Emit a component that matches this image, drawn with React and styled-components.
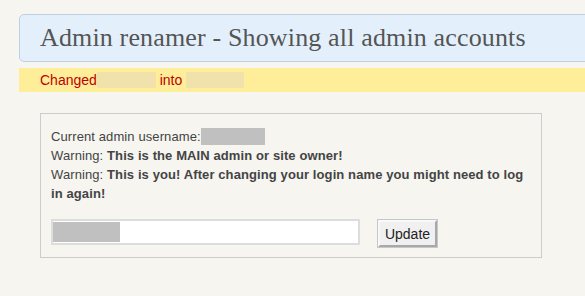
import React from "react";
import styled, { createGlobalStyle } from "styled-components";

const Global = createGlobalStyle`
  html, body { margin: 0; padding: 0; background: #f6f5f0; overflow: hidden; }
  body { font-family: "Liberation Sans", Arial, sans-serif; }
`;

const Page = styled.div`
  width: 620px;
  padding: 14px 0 0 19px;
  display: flex;
  flex-direction: column;
`;

const Header = styled.div`
  height: 46px;
  display: flex;
  align-items: center;
  padding-left: 20px;
  background: #e3f0fc;
  border: 1px solid #bfcfdf;
  border-radius: 5px;
`;

const Title = styled.h1`
  margin: 0;
  font-family: "Liberation Serif", Georgia, serif;
  font-weight: normal;
  font-size: 26px;
  letter-spacing: 0.15px;
  color: #555;
  margin-top: -1px;
`;

const Notice = styled.div`
  margin-top: 6px;
  height: 24px;
  background: #ffee99;
  display: flex;
  align-items: center;
  padding-left: 21px;
  font-size: 14px;
  color: #c00000;
`;

const Mask = styled.span`
  display: inline-block;
  width: ${(p) => p.$w}px;
  height: ${(p) => p.$h}px;
  background: ${(p) => p.$c};
  vertical-align: middle;
  margin: ${(p) => p.$m || "0"};
`;

const Box = styled.div`
  margin: 21px 0 0 21px;
  width: 480px;
  border: 1px solid #cccccc;
  padding: 13px 10px 10px 10px;
  font-size: 13px;
  line-height: 19px;
  letter-spacing: 0.1px;
  color: #444;
`;

const Line = styled.div``;

const Strong = styled.b`
  font-weight: bold;
`;

const FormRow = styled.div`
  display: flex;
  align-items: flex-start;
  gap: 18px;
  margin-top: 16px;
`;

const Input = styled.div`
  width: 305px;
  height: 22px;
  background: #fff;
  border: 2px solid #dddddd;
  display: flex;
  align-items: center;
`;

const Button = styled.button`
  width: 59px;
  height: 27px;
  margin-top: 1px;
  font-family: "Liberation Sans", Arial, sans-serif;
  font-size: 14px;
  color: #222;
  background: #f0f0f0;
  border: 2px solid;
  border-color: #f8f8f8 #a8a8a8 #a8a8a8 #f8f8f8;
  outline: 1px solid #c8c8c8;
  padding: 0;
`;

export default function App() {
  return (
    <>
      <Global />
      <Page>
        <Header>
          <Title>Admin renamer - Showing all admin accounts</Title>
        </Header>
        <Notice>
          Changed
          <Mask $w={59} $h={16} $c="#f0e2aa" />
          &nbsp;into&nbsp;
          <Mask $w={58} $h={16} $c="#f0e2aa" />
        </Notice>
        <Box>
          <Line>
            Current admin username:<Mask $w={64} $h={17} $c="#c0c0c0" $m="-3px 0 0 0" />
          </Line>
          <Line>
            Warning: <Strong>This is the MAIN admin or site owner!</Strong>
          </Line>
          <Line>
            Warning: <Strong>This is you! After changing your login name you might need to log in again!</Strong>
          </Line>
          <FormRow>
            <Input>
              <Mask $w={67} $h={20} $c="#c0c0c0" />
            </Input>
            <Button>Update</Button>
          </FormRow>
        </Box>
      </Page>
    </>
  );
}
